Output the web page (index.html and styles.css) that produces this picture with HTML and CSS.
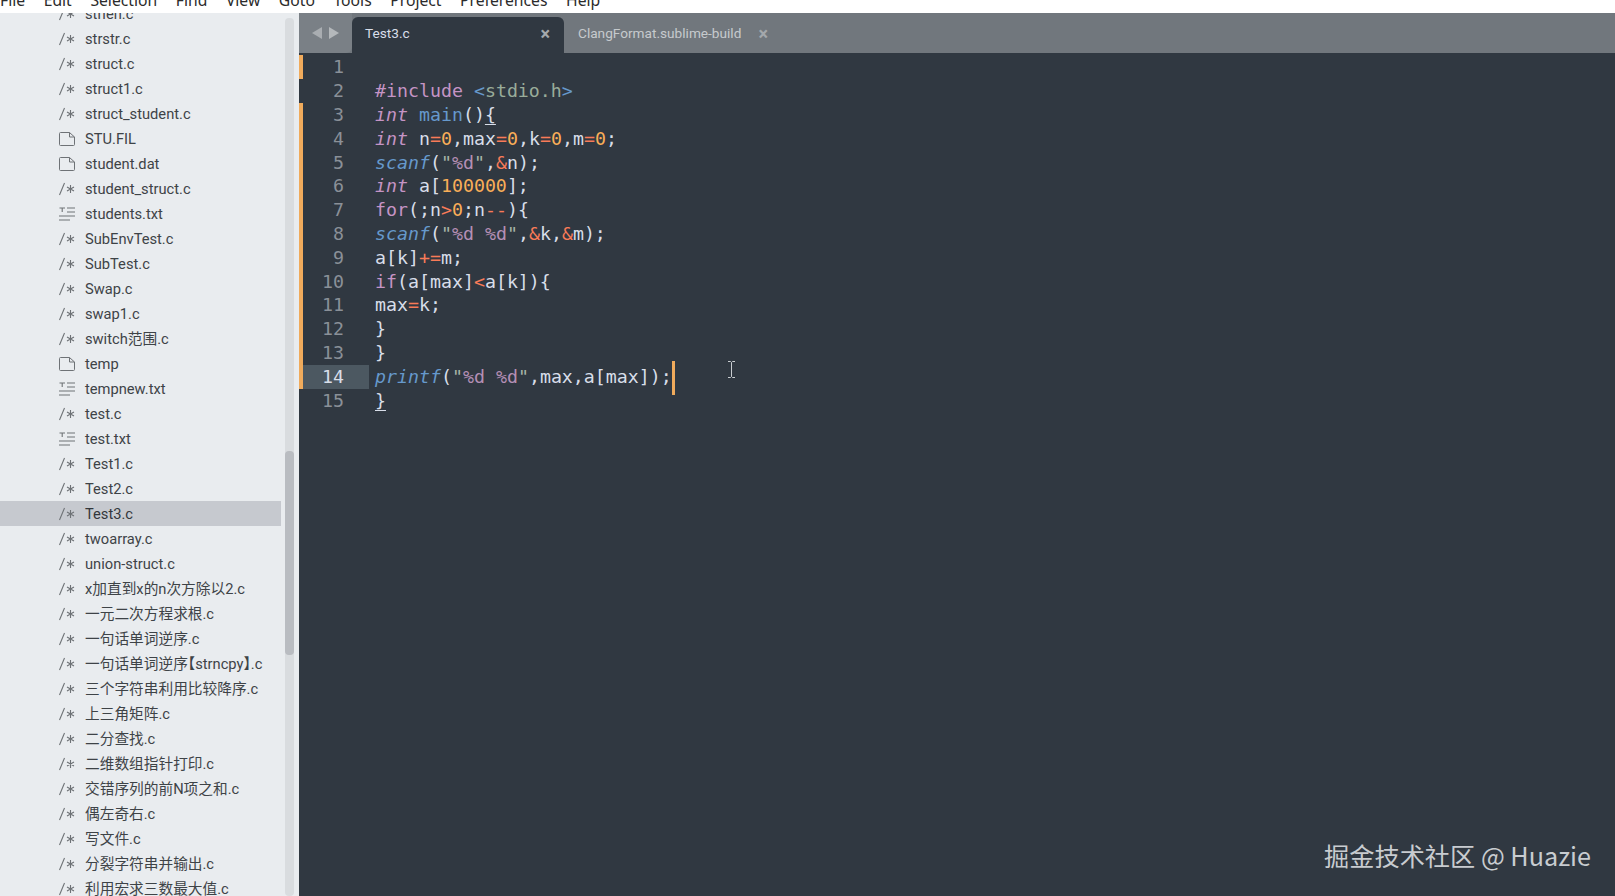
FILE: index.html
```html
<!DOCTYPE html>
<html lang="zh">
<head>
<meta charset="utf-8">
<title>Test3.c</title>
<link rel="stylesheet" href="styles.css">
</head>
<body>
<svg class="defs" width="0" height="0" aria-hidden="true">
  <symbol id="i-c" viewBox="0 0 16 14">
    <path d="M0.5 13 L5.5 1" fill="none" stroke="currentColor" stroke-width="1.1"/>
    <path d="M11.5 3 V11 M8 5 L15 9 M15 5 L8 9" fill="none" stroke="currentColor" stroke-width="1.1"/>
  </symbol>
  <symbol id="i-f" viewBox="0 0 16 14">
    <path d="M1.5 0.5 H10.5 L15.5 5 V12.5 Q15.5 13.5 14.5 13.5 H1.5 Q0.5 13.5 0.5 12.5 V1.5 Q0.5 0.5 1.5 0.5 Z M10.5 0.5 V5 H15.5" fill="none" stroke="currentColor" stroke-width="1"/>
  </symbol>
  <symbol id="i-t" viewBox="0 0 16 14">
    <path d="M0.5 1 H6 M3.2 1 V5 M8 1 H16 M8 5 H16 M0 9 H16 M0 13 H11" fill="none" stroke="currentColor" stroke-width="1.1"/>
  </symbol>
</svg>
<header class="menubar">
  <span class="m-file">File</span><span>Edit</span><span>Selection</span><span>Find</span><span>View</span><span>Goto</span><span>Tools</span><span>Project</span><span>Preferences</span><span>Help</span>
</header>
<main class="app">
  <aside class="sidebar">
    <ul class="tree">
      <li><svg class="ic"><use href="#i-c"/></svg>strlen.c</li>
      <li><svg class="ic"><use href="#i-c"/></svg>strstr.c</li>
      <li><svg class="ic"><use href="#i-c"/></svg>struct.c</li>
      <li><svg class="ic"><use href="#i-c"/></svg>struct1.c</li>
      <li><svg class="ic"><use href="#i-c"/></svg>struct_student.c</li>
      <li><svg class="ic"><use href="#i-f"/></svg>STU.FIL</li>
      <li><svg class="ic"><use href="#i-f"/></svg>student.dat</li>
      <li><svg class="ic"><use href="#i-c"/></svg>student_struct.c</li>
      <li><svg class="ic"><use href="#i-t"/></svg>students.txt</li>
      <li><svg class="ic"><use href="#i-c"/></svg>SubEnvTest.c</li>
      <li><svg class="ic"><use href="#i-c"/></svg>SubTest.c</li>
      <li><svg class="ic"><use href="#i-c"/></svg>Swap.c</li>
      <li><svg class="ic"><use href="#i-c"/></svg>swap1.c</li>
      <li><svg class="ic"><use href="#i-c"/></svg>switch范围.c</li>
      <li><svg class="ic"><use href="#i-f"/></svg>temp</li>
      <li><svg class="ic"><use href="#i-t"/></svg>tempnew.txt</li>
      <li><svg class="ic"><use href="#i-c"/></svg>test.c</li>
      <li><svg class="ic"><use href="#i-t"/></svg>test.txt</li>
      <li><svg class="ic"><use href="#i-c"/></svg>Test1.c</li>
      <li><svg class="ic"><use href="#i-c"/></svg>Test2.c</li>
      <li class="sel"><svg class="ic"><use href="#i-c"/></svg>Test3.c</li>
      <li><svg class="ic"><use href="#i-c"/></svg>twoarray.c</li>
      <li><svg class="ic"><use href="#i-c"/></svg>union-struct.c</li>
      <li><svg class="ic"><use href="#i-c"/></svg>x加直到x的n次方除以2.c</li>
      <li><svg class="ic"><use href="#i-c"/></svg>一元二次方程求根.c</li>
      <li><svg class="ic"><use href="#i-c"/></svg>一句话单词逆序.c</li>
      <li><svg class="ic"><use href="#i-c"/></svg><span>一句话单词逆序<span class="br">【</span>strncpy<span class="br">】</span>.c</span></li>
      <li><svg class="ic"><use href="#i-c"/></svg>三个字符串利用比较降序.c</li>
      <li><svg class="ic"><use href="#i-c"/></svg>上三角矩阵.c</li>
      <li><svg class="ic"><use href="#i-c"/></svg>二分查找.c</li>
      <li><svg class="ic"><use href="#i-c"/></svg>二维数组指针打印.c</li>
      <li><svg class="ic"><use href="#i-c"/></svg>交错序列的前N项之和.c</li>
      <li><svg class="ic"><use href="#i-c"/></svg>偶左奇右.c</li>
      <li><svg class="ic"><use href="#i-c"/></svg>写文件.c</li>
      <li><svg class="ic"><use href="#i-c"/></svg>分裂字符串并输出.c</li>
      <li><svg class="ic"><use href="#i-c"/></svg>利用宏求三数最大值.c</li>
    </ul>
    <div class="track"><div class="thumb"></div></div>
  </aside>
  <section class="editor">
    <nav class="tabbar">
      <div class="arrows"><i class="arr-l"></i><i class="arr-r"></i></div>
      <div class="tab active"><span>Test3.c</span><b>×</b></div>
      <div class="tab"><span>ClangFormat.sublime-build</span><b>×</b></div>
    </nav>
    <div class="code">
      <div class="ln mod"><span class="no">1</span><code></code></div>
      <div class="ln"><span class="no">2</span><code><span class="k">#include</span> <span class="f">&lt;</span><span class="h">stdio.h</span><span class="f">&gt;</span></code></div>
      <div class="ln mod"><span class="no">3</span><code><em class="k">int</em> <span class="f">main</span>()<u>{</u></code></div>
      <div class="ln mod"><span class="no">4</span><code><em class="k">int</em> n<span class="o">=</span><span class="n">0</span>,max<span class="o">=</span><span class="n">0</span>,k<span class="o">=</span><span class="n">0</span>,m<span class="o">=</span><span class="n">0</span>;</code></div>
      <div class="ln mod"><span class="no">5</span><code><em class="f">scanf</em>(<span class="q">"</span><span class="p">%d</span><span class="q">"</span>,<span class="o">&amp;</span>n);</code></div>
      <div class="ln mod"><span class="no">6</span><code><em class="k">int</em> a[<span class="n">100000</span>];</code></div>
      <div class="ln mod"><span class="no">7</span><code><span class="k">for</span>(;n<span class="o">&gt;</span><span class="n">0</span>;n<span class="o">--</span>){</code></div>
      <div class="ln mod"><span class="no">8</span><code><em class="f">scanf</em>(<span class="q">"</span><span class="p">%d</span> <span class="p">%d</span><span class="q">"</span>,<span class="o">&amp;</span>k,<span class="o">&amp;</span>m);</code></div>
      <div class="ln mod"><span class="no">9</span><code>a[k]<span class="o">+=</span>m;</code></div>
      <div class="ln mod"><span class="no">10</span><code><span class="k">if</span>(a[max]<span class="o">&lt;</span>a[k]){</code></div>
      <div class="ln mod"><span class="no">11</span><code>max<span class="o">=</span>k;</code></div>
      <div class="ln mod"><span class="no">12</span><code>}</code></div>
      <div class="ln mod"><span class="no">13</span><code>}</code></div>
      <div class="ln mod cur"><span class="no">14</span><code><em class="f">printf</em>(<span class="q">"</span><span class="p">%d</span> <span class="p">%d</span><span class="q">"</span>,max,a[max]);<i class="caret"></i></code></div>
      <div class="ln"><span class="no">15</span><code><u>}</u></code></div>
      <svg class="ibeam" width="9" height="17" viewBox="0 0 9 17"><path d="M1 0.5 H3.5 L4.5 1.5 L5.5 0.5 H8 M4.5 1.5 V15.5 M1 16.5 H3.5 L4.5 15.5 L5.5 16.5 H8" fill="none" stroke="#c9cdd1" stroke-width="1"/></svg>
    </div>
    <div class="mark">掘金技术社区 @ Huazie</div>
  </section>
</main>
</body>
</html>
```
FILE: styles.css
```css
* { box-sizing: border-box; }
html, body { margin: 0; height: 100%; overflow: hidden; }
body {
  display: flex;
  flex-direction: column;
  height: 896px;
  background: #fff;
  font-family: Roboto, "Noto Sans CJK SC", sans-serif;
}
.defs { position: absolute; }

.menubar {
  flex: 0 0 13px;
  height: 13px;
  overflow: hidden;
  background: #fff;
  color: #2b2b2b;
  font-family: "Noto Sans", sans-serif;
  font-size: 15.7px;
  line-height: 13px;
  white-space: nowrap;
  display: flex;
  gap: 18.6px;
}
.menubar span { position: relative; top: -6px; }

.app { flex: 1; display: flex; min-height: 0; }

.sidebar {
  flex: 0 0 299px;
  position: relative;
  overflow: hidden;
  background: #e9ecef;
}
.tree {
  list-style: none;
  margin: -12px 0 0;
  padding: 0;
  width: 281px;
}
.tree li {
  height: 25px;
  line-height: 23px;
  padding: 2px 0 0 59px;
  display: flex;
  align-items: center;
  font-size: 14.7px;
  color: #3e4347;
  white-space: nowrap;
}
.tree li.sel { background: #c6c9cf; color: #33373c; }
.br { font-feature-settings: "halt"; font-weight: 500; }
.ic { width: 16px; height: 14px; margin: 0 10px 2px 0; color: #6e7276; flex: none; }

.track {
  position: absolute;
  left: 285px;
  top: 5px;
  bottom: 0;
  width: 9px;
  border-radius: 4px;
  background: #d9dcdf;
}
.thumb {
  position: absolute;
  left: 0;
  top: 433px;
  width: 9px;
  height: 204px;
  border-radius: 4px;
  background: #b9bcc1;
}

.editor {
  flex: 1;
  position: relative;
  display: flex;
  flex-direction: column;
  background: #303841;
  min-width: 0;
}
.tabbar {
  flex: 0 0 40px;
  display: flex;
  align-items: flex-end;
  background: #71777d;
  font-size: 13.65px;
}
.arrows {
  width: 53px;
  height: 40px;
  display: flex;
  align-items: center;
  gap: 7px;
  padding-left: 13px;
  background: #7a8086;
  border-bottom-right-radius: 6px;
}
.arrows i {
  width: 0;
  height: 0;
  border-top: 6px solid transparent;
  border-bottom: 6px solid transparent;
}
.arr-l { border-right: 10px solid #a9adb1; }
.arr-r { border-left: 10px solid #b4b8bb; }
.tab {
  height: 36px;
  padding-bottom: 4px;
  display: flex;
  align-items: center;
  justify-content: space-between;
  color: #c6cacd;
}
.tab span { display: block; }
.tab b { font-weight: 700; font-size: 18px; color: #a4a8ac; }
.tab.active {
  width: 212px;
  padding-left: 13px;
  padding-right: 14px;
  background: #303841;
  color: #d8dee9;
  border-radius: 6px 6px 0 0;
}
.tab:not(.active) {
  padding-left: 14px;
  gap: 17px;
}

.code {
  flex: 1;
  position: relative;
  padding-top: 2.4px;
  font-family: "DejaVu Sans Mono", monospace;
  font-size: 18.25px;
  color: #d8dee9;
}
.ln {
  height: 23.8px;
  line-height: 23.8px;
  display: flex;
}
.no {
  width: 70px;
  flex: none;
  padding-right: 25px;
  text-align: right;
  color: #8a9098;
  border-left: 4px solid transparent;
}
.mod .no { border-left-color: #f0ab5c; }
.cur .no { background: #4c5861; color: #d8dee9; }
code { font: inherit; padding-left: 6px; white-space: pre; position: relative; }
em { font-style: italic; }
.k { color: #c594c5; }
.f { color: #6699cc; }
.h { color: #99ac9a; }
.n { color: #f9ae58; }
.o { color: #f97b58; }
.q { color: #a8b5a8; }
.p { color: #b58fb5; }
u { text-decoration: underline; text-decoration-color: #d8dee9; text-underline-offset: 3px; }
.caret {
  position: absolute;
  right: -3px;
  top: -4px;
  width: 3px;
  height: 34px;
  background: #f0ab5c;
}
.ibeam { position: absolute; left: 428px; top: 308px; }
.mark {
  position: absolute;
  right: 24px;
  bottom: 24px;
  font-family: "Noto Sans CJK SC", "Noto Sans", sans-serif;
  font-size: 25.2px;
  line-height: 34px;
  color: #c8ccd0;
}
```
